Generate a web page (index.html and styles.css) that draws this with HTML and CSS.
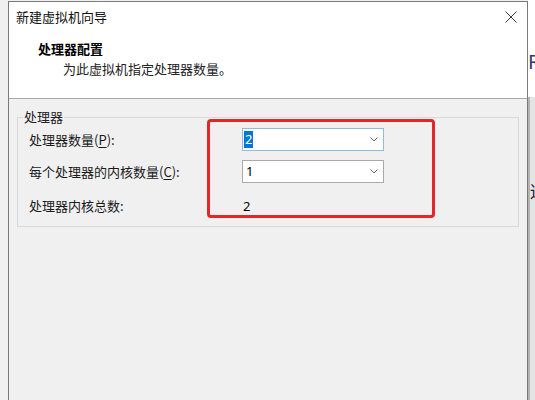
FILE: index.html
```html
<!DOCTYPE html>
<html lang="zh-CN">
<head>
<meta charset="utf-8">
<title>新建虚拟机向导</title>
<link rel="stylesheet" href="styles.css">
</head>
<body>
<div class="desk">
  <div class="strip-left"></div>
  <div class="window">
    <div class="header">
      <div class="titlebar">
        <span class="title">新建虚拟机向导</span>
        <svg class="close" width="12" height="12" viewBox="0 0 12 12"><path d="M0.5 0.5 L11.5 11.5 M11.5 0.5 L0.5 11.5" stroke="#3c3c3c" stroke-width="1" fill="none"/></svg>
      </div>
      <div class="heading">处理器配置</div>
      <div class="desc">为此虚拟机指定处理器数量。</div>
    </div>
    <div class="body">
      <fieldset class="group">
        <legend>处理器</legend>
        <div class="row">
          <span class="label">处理器数量(<u>P</u>):</span>
          <div class="combo focus">
            <span class="value"><span class="sel">2</span></span>
            <svg class="chev" width="8" height="5" viewBox="0 0 8 5"><path d="M0.5 0.5 L4 4 L7.5 0.5" stroke="#6a6a6a" stroke-width="1" fill="none"/></svg>
          </div>
        </div>
        <div class="row">
          <span class="label">每个处理器的内核数量(<u>C</u>):</span>
          <div class="combo">
            <span class="value">1</span>
            <svg class="chev" width="8" height="5" viewBox="0 0 8 5"><path d="M0.5 0.5 L4 4 L7.5 0.5" stroke="#6a6a6a" stroke-width="1" fill="none"/></svg>
          </div>
        </div>
        <div class="row total">
          <span class="label">处理器内核总数:</span>
          <span class="static">2</span>
        </div>
      </fieldset>
      <div class="highlight"></div>
    </div>
  </div>
  <div class="strip-right">
    <div class="peek-top"><span class="peek-r">R</span></div>
    <div class="peek-bottom"><span class="peek-c">适</span></div>
  </div>
</div>
</body>
</html>
```

FILE: styles.css
```css
html, body {
  margin: 0;
  padding: 0;
  background: #f0f0f0;
}
body {
  font-family: "Noto Sans CJK SC", "Noto Sans", sans-serif;
  font-size: 13px;
  color: #1a1a1a;
}
.desk {
  display: flex;
  width: 535px;
  height: 400px;
  overflow: hidden;
}
.strip-left {
  width: 8px;
  flex: none;
  background: #f0f0f0;
}
.window {
  width: 518px;
  flex: none;
  margin-top: 1px;
  border: 1px solid #7a7a7a;
  border-bottom: none;
  display: flex;
  flex-direction: column;
  background: #f0f0f0;
}
.header {
  height: 96px;
  background: #ffffff;
  border-bottom: 1px solid #a8a8a8;
}
.titlebar {
  height: 30px;
  display: flex;
  align-items: center;
  justify-content: space-between;
  padding: 0 10px 0 7px;
}
.title {
  font-size: 13px;
  color: #111;
  line-height: 30px;
}
.close {
  display: block;
}
.heading {
  margin-top: 7px;
  padding-left: 29px;
  line-height: 20px;
  font-weight: bold;
  color: #000;
}
.desc {
  padding-left: 54px;
  line-height: 20px;
  color: #222;
}
.body {
  flex: 1;
  position: relative;
  background: #f0f0f0;
}
.group {
  margin: 10px 8px 0 8px;
  padding: 0 0 10px 0;
  border: 1px solid #d9d9d9;
  min-width: 0;
}
.group legend {
  margin-left: 5px;
  padding: 0 1px;
  line-height: 16px;
  font-size: 13px;
  color: #222;
}
.row {
  display: grid;
  grid-template-columns: 213px 142px;
  align-items: center;
  padding-left: 11px;
  height: 23px;
}
.row:first-of-type {
  margin-top: 3px;
}
.row + .row {
  margin-top: 9px;
}
.row.total {
  margin-top: 13px;
  height: 20px;
}
.label {
  line-height: 20px;
  white-space: nowrap;
}
.label u {
  text-decoration: underline;
  text-underline-offset: 2px;
}
.combo {
  box-sizing: border-box;
  height: 23px;
  border: 1px solid #a9a9a9;
  background: #ffffff;
  display: flex;
  align-items: center;
  justify-content: space-between;
  padding: 0 5px 0 1px;
  font-family: "Noto Sans", "Liberation Sans", sans-serif;
  font-size: 13px;
  color: #000;
}
.combo.focus {
  border-color: #8ebbe6;
}
.value {
  line-height: 17px;
  padding-left: 2px;
}
.combo.focus .value {
  padding-left: 0;
}
.sel {
  display: inline-block;
  background: #0078d7;
  color: #ffffff;
  padding: 0 1px;
  line-height: 17px;
}
.chev {
  display: block;
}
.static {
  font-family: "Noto Sans", "Liberation Sans", sans-serif;
  font-size: 13px;
  color: #000;
  padding-left: 1px;
}
.highlight {
  position: absolute;
  left: 198px;
  top: 20px;
  width: 222px;
  height: 93px;
  border: 3px solid #e3262b;
  border-radius: 4px;
}
.strip-right {
  flex: 1;
  display: flex;
  flex-direction: column;
  overflow: hidden;
}
.peek-top {
  height: 97px;
  background: #ffffff;
  position: relative;
}
.peek-r {
  position: absolute;
  left: 0;
  top: 50px;
  font-family: "Noto Sans", sans-serif;
  font-size: 20px;
  line-height: 24px;
  color: #2b3b6b;
}
.peek-bottom {
  flex: 1;
  background: #e4e4e4;
  border-left: 2px solid #b4b4b4;
  position: relative;
}
.peek-c {
  position: absolute;
  left: 0;
  top: 84px;
  font-size: 17px;
  line-height: 20px;
  color: #222;
}
```
